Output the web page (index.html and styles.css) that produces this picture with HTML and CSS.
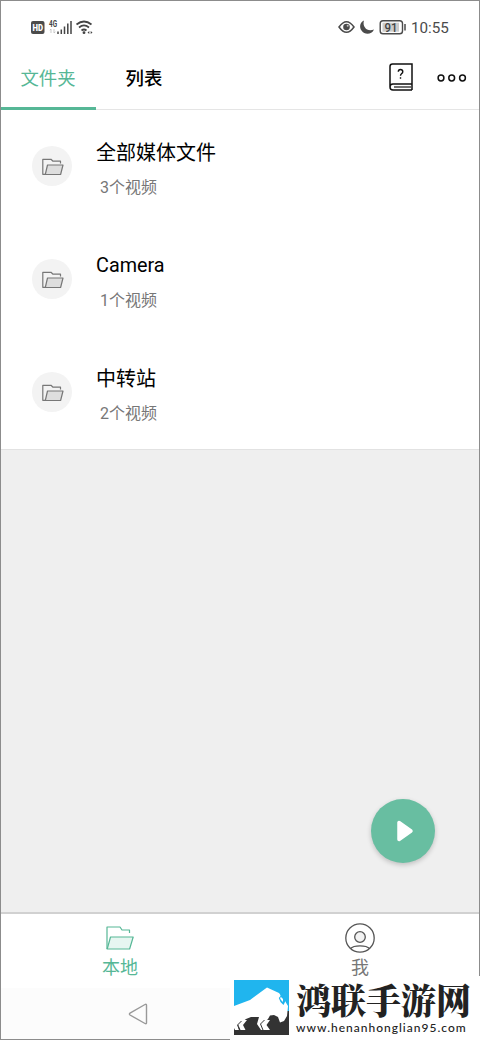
FILE: index.html
```html
<!DOCTYPE html>
<html lang="zh-CN">
<head>
<meta charset="utf-8">
<title>文件夹</title>
<link rel="stylesheet" href="styles.css">
</head>
<body>
<svg class="defs" width="0" height="0">
  <symbol id="folder" viewBox="0 0 28 24">
    <path class="fold-back" d="M1 23V1H14L16 4H23.5V7"/>
    <path class="fold-front" d="M4.5 11H27.2L23.6 23H1.2Z"/>
  </symbol>
  <symbol id="folder-small" viewBox="0 0 22 18">
    <path class="fold-back" d="M3 16.300H.8V1.300H9L11 3.200H18.500V5.500"/>
    <path class="fold-front" d="M5.500 7H21L18.600 16.500H3.300Z"/>
  </symbol>
</svg>
<div class="screen">
  <header class="status">
    <svg class="signals" width="64" height="18" viewBox="0 0 64 18">
      <rect x="0" y="3" width="13.5" height="13" rx="2" fill="#4b4b4b"/>
      <text x="1.5" y="12.500" class="hd" textLength="10.5" lengthAdjust="spacingAndGlyphs">HD</text>
      <text x="18" y="8.500" class="net" textLength="8" lengthAdjust="spacingAndGlyphs">4G</text>
      <path d="M20 11V15M18.800 12.200L20 11M23 11V15L24.400 13.800" stroke="#bbb" stroke-width=".8" fill="none"/>
      <path d="M27 13.500V16M30.300 11.500V16M33.500 8.500V16M36.800 5.500V16M40 3V16" stroke="#444" stroke-width="1.500"/>
      <g fill="none" stroke="#444" stroke-width="1.700"><path d="M45.500 6.500Q53 .5 60.500 6.500M48 9.500Q53 5.400 58 9.500M50.500 12.500Q53 10.500 55.500 12.500"/></g>
      <circle cx="53" cy="14.700" r="1.400" fill="#444"/>
      <path d="M56.500 14.500L58.300 13V16ZM61.500 14.500L59.700 13V16Z" fill="#444"/>
    </svg>
    <div class="status-right">
      <svg width="68" height="18" viewBox="0 0 68 18">
        <path d="M1 9Q8.500-1.500 16 9Q8.500 19.500 1 9Z" fill="none" stroke="#4b4b4b" stroke-width="1.500"/>
        <circle cx="8.500" cy="9" r="3.300" fill="#4b4b4b"/><circle cx="9.700" cy="7.800" r="1" fill="#bbb"/>
        <path d="M26 2.500C22 4 21 9 23.500 12.500C26.500 17 33.500 17 36 11.500C32 13 28.500 12 27 9.500C25.500 7.500 25.200 5 26 2.500Z" fill="#4b4b4b"/>
        <rect x="42.200" y="2.700" width="22.300" height="13" rx="2.800" fill="#fff" stroke="#4b4b4b" stroke-width="1.400"/>
        <rect x="44.500" y="4.700" width="16.500" height="9" fill="#ccc"/>
        <path d="M67 6V12.500" stroke="#4b4b4b" stroke-width="1.500"/>
        <text x="46.500" y="13.500" class="battery" textLength="13" lengthAdjust="spacingAndGlyphs">91</text>
      </svg>
      <span class="clock">10:55</span>
    </div>
  </header>
  <nav class="tabs">
    <div class="tab active">文件夹</div>
    <div class="tab">列表</div>
    <div class="actions">
      <svg width="24" height="28" viewBox="0 0 24 28" fill="none" stroke="#111" stroke-width="1.500">
        <path d="M23 27H4Q1 27 1 24V3.500Q1 1 3.500 1H23V21H4Q1 21 1 24M23 21V27"/>
        <path d="M5 24H22" stroke-width="1.200"/>
        <path d="M9.300 8.700Q9.300 6.500 11.500 6.500T13.800 8.700Q13.800 9.800 12.500 10.700Q11.500 11.500 11.500 12.800M11.500 14.200V15.700" stroke-width="1.400"/>
      </svg>
      <svg class="more" width="30" height="10" viewBox="0 0 30 10" fill="none" stroke="#111" stroke-width="1.500">
        <circle cx="4" cy="5" r="2.900"/><circle cx="14.700" cy="5" r="2.900"/><circle cx="25.500" cy="5" r="2.900"/>
      </svg>
    </div>
  </nav>
  <main class="list">
    <div class="item"><div class="avatar"><svg class="mini"><use href="#folder-small"/></svg></div><div class="info"><div class="name">全部媒体文件</div><div class="count">3个视频</div></div></div>
    <div class="item"><div class="avatar"><svg class="mini"><use href="#folder-small"/></svg></div><div class="info"><div class="name latin">Camera</div><div class="count">1个视频</div></div></div>
    <div class="item"><div class="avatar"><svg class="mini"><use href="#folder-small"/></svg></div><div class="info"><div class="name">中转站</div><div class="count">2个视频</div></div></div>
  </main>
  <section class="blank"></section>
  <nav class="bottom">
    <div class="dest current"><svg class="big"><use href="#folder"/></svg><span>本地</span></div>
    <div class="dest">
      <svg width="30" height="30" viewBox="0 0 30 30" fill="none" stroke="#555" stroke-width="1.300">
        <circle cx="15" cy="15" r="14.200"/><circle cx="15" cy="14" r="5.300" fill="#f3f3f3"/>
        <path d="M5.500 25.500Q8 22.800 15 22.800T24.500 25.500"/>
      </svg><span>我</span>
    </div>
  </nav>
  <footer class="system">
    <svg width="20" height="22" viewBox="0 0 20 22"><path d="M17 1.500Q18.500 .7 18.500 2.300V19.700Q18.500 21.300 17 20.500L2 12Q.8 11 2 10.200Z" fill="none" stroke="#999" stroke-width="1.400"/></svg>
  </footer>
</div>
<button class="play" aria-label="播放"><svg width="18" height="24" viewBox="0 0 18 24"><path d="M3 3.500V20.500L15 12Z" fill="#fff" stroke="#fff" stroke-width="3.500" stroke-linejoin="round"/></svg></button>
<aside class="watermark">
  <svg width="55" height="55" viewBox="0 0 55 55">
    <path d="M0 0H55V55H0Z" fill="#333"/>
    <path d="M0 0H55V32H0Z" fill="#20b5ee"/>
    <path d="M53 31H55V34H53Z" fill="#333"/>
    <path d="M0 26L16 20L33 7.500L45 13L51 21L54 26L53 36L50 41L46 42.500L44 37L40 35L36 35.500L34 39L29 44L32 50H27L23 44L25 37H17L12 39L8 42L4 45L5 50H1L0 48Z" fill="#fff"/>
    <path d="M48.500 10.500L48 14L51 17V22L49.500 25L46.500 22L44.800 18L46.500 16V12.500Z" fill="#20b5ee"/>
    <path d="M46 18L47 17L49 19V22L47 20Z" fill="#fff"/>
    <path d="M13 40H8L4 44L6.500 50H11.500L9 45ZM36 40H31L27 44L30 50H36L32.500 45Z" fill="#fff"/>
    <path d="M7.500 41L3.500 45L5.500 50M30.500 40L26.500 44L29 50" fill="none" stroke="#333" stroke-width="1"/>
  </svg>
  <div class="brand"><div class="brand-name">鸿联手游网</div><div class="brand-url">www.henanhonglian95.com</div></div>
</aside>
</body>
</html>
```
FILE: styles.css
```css
* { box-sizing: border-box; }
body { margin: 0; font-family: Roboto, "Noto Sans CJK SC", sans-serif; background: #fff; }
.defs { position: absolute; }
.screen { width: 480px; height: 1040px; border: 1px solid #8c8c8c; display: flex; flex-direction: column; background: #fff; }
.status { height: 45px; display: flex; justify-content: space-between; padding: 17px 30px 0; }
.status svg { display: block; }
.status-right { display: flex; gap: 5px; height: 18px; }
.clock { font-size: 15.2px; line-height: 20px; color: #4b4b4b; width: 38px; white-space: nowrap; }
.hd { font: 900 8.5px Roboto; fill: #fff; }
.net { font: 700 8.5px Roboto; fill: #444; }
.battery { font: 500 12px Roboto; fill: #444; }
.tabs { height: 64px; display: flex; border-bottom: 1px solid #e5e5e5; font-size: 18.4px; line-height: 26px; color: #000; font-weight: 500; }
.tab { width: 96px; height: 64px; padding-top: 20px; text-align: center; }
.tab.active { width: 95px; padding-right: 1px; color: #56b796; border-bottom: 3px solid #56b796; font-weight: 400; }
.actions { margin-left: auto; display: flex; align-items: center; gap: 24px; padding: 0 12px 0 0; height: 62px; }
.more { margin-top: 2px; }
.list { height: 339px; }
.item { display: flex; height: 113px; padding: 36px 0 0 31px; }
.avatar { width: 40px; height: 40px; border-radius: 50%; background: #f3f3f3; display: flex; align-items: center; justify-content: center; }
.mini { width: 22px; height: 18px; margin: 2px 0 0 1px; --line: #777; --fill: #dedede; }
.big { width: 28px; height: 24px; margin: 3px 0; --line: #56b796; --fill: #e7f6f1; }
.fold-back, .fold-front { stroke: var(--line); stroke-width: 1.2px; stroke-linejoin: round; fill: none; }
.fold-front { fill: var(--fill); }
.info { margin: -8px 0 0 24px; }
.name { font-size: 20px; line-height: 30px; color: #000; }
.latin { font-size: 19.8px; }
.count { font-size: 16px; line-height: 24px; color: #777; padding: 8px 0 0 4px; }
.blank { flex: 1; background: #efefef; border-top: 1px solid #e2e2e2; }
.bottom { height: 76px; border-top: 2px solid #d1d1d1; display: flex; }
.dest { flex: 1; display: flex; flex-direction: column; align-items: center; padding-top: 9px; color: #777; font-size: 18px; line-height: 26px; }
.dest span { margin-top: 2px; }
.current { color: #56b796; padding-right: 2px; }
.system { height: 51px; background: #fcfcfc; padding: 15px 0 0 127px; }
.play { position: absolute; left: 371px; top: 799px; width: 64px; height: 64px; border: 0; border-radius: 50%; background: #68bea1; box-shadow: 0 2px 5px #0003; display: flex; align-items: center; justify-content: center; padding: 0 0 0 4px; }
.watermark { position: absolute; left: 230px; top: 976px; width: 250px; height: 64px; background: #fff; display: flex; padding: 4px 0 0 4px; gap: 7px; }
.brand-name { margin-top: -1px; font-family: "Noto Serif CJK SC", "Noto Sans CJK SC", serif; font-weight: 900; font-size: 35px; line-height: 40px; color: #222; white-space: nowrap; }
.brand-url { margin-top: 2px; font: 500 12px/14px Lato, sans-serif; letter-spacing: 1px; color: #222; white-space: nowrap; }
```
